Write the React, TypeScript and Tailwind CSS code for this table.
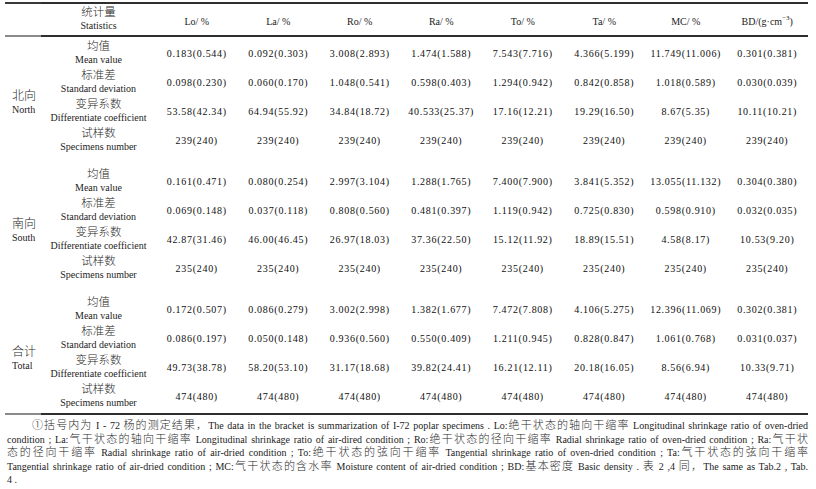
import React from "react";

type Group = { cn: string; en: string; rows: string[][] };

const STATS: [string, string][] = [
  ["均值", "Mean value"],
  ["标准差", "Standard deviation"],
  ["变异系数", "Differentiate coefficient"],
  ["试样数", "Specimens number"],
];

const GROUPS: Group[] = [
  {
    cn: "北向",
    en: "North",
    rows: [
      ["0.183(0.544)", "0.092(0.303)", "3.008(2.893)", "1.474(1.588)", "7.543(7.716)", "4.366(5.199)", "11.749(11.006)", "0.301(0.381)"],
      ["0.098(0.230)", "0.060(0.170)", "1.048(0.541)", "0.598(0.403)", "1.294(0.942)", "0.842(0.858)", "1.018(0.589)", "0.030(0.039)"],
      ["53.58(42.34)", "64.94(55.92)", "34.84(18.72)", "40.533(25.37)", "17.16(12.21)", "19.29(16.50)", "8.67(5.35)", "10.11(10.21)"],
      Array(8).fill("239(240)"),
    ],
  },
  {
    cn: "南向",
    en: "South",
    rows: [
      ["0.161(0.471)", "0.080(0.254)", "2.997(3.104)", "1.288(1.765)", "7.400(7.900)", "3.841(5.352)", "13.055(11.132)", "0.304(0.380)"],
      ["0.069(0.148)", "0.037(0.118)", "0.808(0.560)", "0.481(0.397)", "1.119(0.942)", "0.725(0.830)", "0.598(0.910)", "0.032(0.035)"],
      ["42.87(31.46)", "46.00(46.45)", "26.97(18.03)", "37.36(22.50)", "15.12(11.92)", "18.89(15.51)", "4.58(8.17)", "10.53(9.20)"],
      Array(8).fill("235(240)"),
    ],
  },
  {
    cn: "合计",
    en: "Total",
    rows: [
      ["0.172(0.507)", "0.086(0.279)", "3.002(2.998)", "1.382(1.677)", "7.472(7.808)", "4.106(5.275)", "12.396(11.069)", "0.302(0.381)"],
      ["0.086(0.197)", "0.050(0.148)", "0.936(0.560)", "0.550(0.409)", "1.211(0.945)", "0.828(0.847)", "1.061(0.768)", "0.031(0.037)"],
      ["49.73(38.78)", "58.20(53.10)", "31.17(18.68)", "39.82(24.41)", "16.21(12.11)", "20.18(16.05)", "8.56(6.94)", "10.33(9.71)"],
      Array(8).fill("474(480)"),
    ],
  },
];

const HEADS = ["Lo/ %", "La/ %", "Ro/ %", "Ra/ %", "To/ %", "Ta/ %", "MC/ %"];

const NOTE_LINES = [
  "①括号内为 I - 72 杨的测定结果，The data in the bracket is summarization of I-72 poplar specimens . Lo:绝干状态的轴向干缩率 Longitudinal shrinkage ratio of oven-dried",
  "condition ; La:气干状态的轴向干缩率 Longitudinal shrinkage ratio of air-dired condition ; Ro:绝干状态的径向干缩率 Radial shrinkage ratio of oven-dried condition ; Ra:气干状",
  "态的径向干缩率 Radial shrinkage ratio of air-dried condition ; To:绝干状态的弦向干缩率 Tangential shrinkage ratio of oven-dried condition ; Ta:气干状态的弦向干缩率",
  "Tangential shrinkage ratio of air-dried condition ; MC:气干状态的含水率 Moisture content of air-dried condition ; BD:基本密度 Basic density . 表 2 ,4 同，The same as Tab.2 , Tab.",
];

// CJK runs get a slightly larger size than the latin text around them
function Mixed({ text }: { text: string }) {
  const parts = text.split(/([\u2460-\u24ff\u3000-\u9fff\uff00-\uffef]+)/);
  return (
    <>
      {parts.map((p, i) =>
        i % 2 ? (
          <span key={i} className="text-[11px] font-light text-[#2a2a2a]">
            {p}
          </span>
        ) : (
          <React.Fragment key={i}>{p}</React.Fragment>
        )
      )}
    </>
  );
}

function Rule({ split }: { split?: boolean }) {
  return (
    <div className="flex h-[2px] w-full">
      <div className={split ? "w-[36px] bg-[#8a8a8a]" : "w-[36px] bg-[#3a3a3a]"} />
      <div className="flex-1 bg-[#2e2e2e]" />
    </div>
  );
}

function StatCell({ cn, en }: { cn: string; en: string }) {
  return (
    <div className="flex flex-col items-center justify-center">
      <span className="text-[11.5px] font-light leading-[14px] text-[#2a2a2a]">{cn}</span>
      <span className="text-[10px] leading-[13px]">{en}</span>
    </div>
  );
}

export default function App() {
  return (
    <div className="h-[489px] w-[816px] bg-white pt-[2px] font-['Liberation_Serif','Noto_Sans_CJK_SC',serif] text-[#1c1c1c]">
      <div className="ml-[5px] w-[803px]">
        <Rule />

        {/* header */}
        <div className="flex h-[31px]">
          <div className="w-[36px]" />
          <div className="grid flex-1 grid-cols-[115px_repeat(8,minmax(0,1fr))]">
            <div className="pt-[1px]">
              <StatCell cn="统计量" en="Statistics" />
            </div>
            {HEADS.map((h) => (
              <div key={h} className="flex items-center justify-center pt-[3px] text-[10px]">
                {h}
              </div>
            ))}
            <div className="flex items-center justify-center pt-[3px] text-[10px]">
              BD/(g·cm<sup className="text-[7px]">−3</sup>)
            </div>
          </div>
        </div>

        <Rule split />

        <div className="flex flex-col gap-[12px] pt-[1px]">
          {GROUPS.map((g) => (
            <div key={g.en} className="flex">
              <div className="flex w-[36px] flex-col justify-center pl-[7px] pt-[13px]">
                <span className="text-[12px] font-light leading-[14px] text-[#2a2a2a]">{g.cn}</span>
                <span className="text-[10px] leading-[13px]">{g.en}</span>
              </div>
              <div className="flex flex-1 flex-col">
                {g.rows.map((row, ri) => (
                  <div key={ri} className="grid h-[29px] grid-cols-[115px_repeat(8,minmax(0,1fr))]">
                    <StatCell cn={STATS[ri][0]} en={STATS[ri][1]} />
                    {row.map((v, ci) => (
                      <div
                        key={ci}
                        className="flex items-center justify-center pt-[1px] text-[10px] tracking-[0.7px] text-[#0f0f0f]"
                      >
                        {v}
                      </div>
                    ))}
                  </div>
                ))}
              </div>
            </div>
          ))}
        </div>

        <div className="mt-[3px]">
          <Rule split />
        </div>

        {/* footnote */}
        <div className="mt-[4px] pl-[2px] text-[10px] leading-[13.5px]">
          {NOTE_LINES.map((line, i) => (
            <div
              key={i}
              className={
                i === 0
                  ? "pl-[25px] text-justify [text-align-last:justify]"
                  : "text-justify [text-align-last:justify]"
              }
            >
              <Mixed text={line} />
            </div>
          ))}
          <div>4 .</div>
        </div>
      </div>
    </div>
  );
}
